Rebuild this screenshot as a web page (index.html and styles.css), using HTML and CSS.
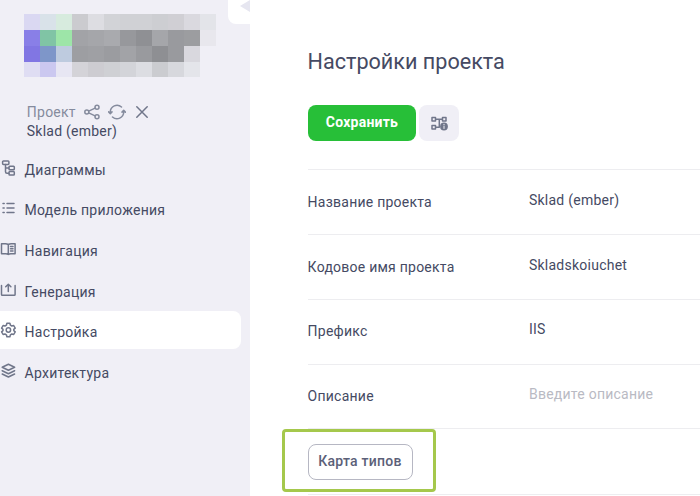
FILE: index.html
```html
<!DOCTYPE html>
<html lang="ru">
<head>
<meta charset="utf-8">
<title>Настройки проекта</title>
<link rel="stylesheet" href="styles.css">
</head>
<body>
<div class="app">
  <aside class="sidebar">
    <svg class="logo" width="192" height="63" viewBox="0 0 192 63" shape-rendering="crispEdges">
      <g><rect width="16" height="16" fill="#dad8f2"/><rect x="16" width="16" height="16" fill="#d9e2e9"/><rect x="32" width="16" height="16" fill="#d7ebde"/><rect x="48" width="16" height="16" fill="#cbcbcf"/><rect x="64" width="16" height="16" fill="#dddde2"/><rect x="80" width="16" height="16" fill="#d2d3d7"/><rect x="96" width="48" height="16" fill="#d0d1d5"/><rect x="128" width="16" height="16" fill="#cdced2"/><rect x="144" width="16" height="16" fill="#d0cfd4"/><rect x="160" width="16" height="16" fill="#dad9df"/><rect x="176" width="16" height="16" fill="#e3e4e9"/></g>
      <g transform="translate(0 16)"><rect width="16" height="16" fill="#897fe7"/><rect x="16" width="16" height="16" fill="#80c4a5"/><rect x="32" width="16" height="16" fill="#9de5a8"/><rect x="48" width="16" height="16" fill="#a2a3a7"/><rect x="64" width="16" height="16" fill="#a5a6aa"/><rect x="80" width="16" height="16" fill="#a9aaae"/><rect x="96" width="16" height="16" fill="#97989c"/><rect x="112" width="16" height="16" fill="#8f9094"/><rect x="128" width="16" height="16" fill="#a5a6aa"/><rect x="144" width="16" height="16" fill="#999a9e"/><rect x="160" width="16" height="16" fill="#9c9da0"/><rect x="176" width="16" height="16" fill="#e8e7ed"/></g>
      <g transform="translate(0 32)"><rect width="16" height="16" fill="#8176e3"/><rect x="16" width="16" height="16" fill="#7e96c9"/><rect x="32" width="16" height="16" fill="#becbdf"/><rect x="48" width="16" height="16" fill="#9d9ea2"/><rect x="64" width="16" height="16" fill="#9fa0a4"/><rect x="80" width="16" height="16" fill="#9b9ca0"/><rect x="96" width="16" height="16" fill="#a2a3a7"/><rect x="112" width="16" height="16" fill="#999a9e"/><rect x="128" width="16" height="16" fill="#8e8f93"/><rect x="144" width="16" height="16" fill="#999a9e"/><rect x="160" width="16" height="16" fill="#d9d8de"/></g>
      <g transform="translate(0 48)"><rect width="16" height="15" fill="#dfddf3"/><rect x="16" width="16" height="15" fill="#cbc8f0"/><rect x="32" width="16" height="15" fill="#e7e6f3"/><rect x="48" width="16" height="15" fill="#d4d3d8"/><rect x="64" width="16" height="15" fill="#cdccd1"/><rect x="80" width="16" height="15" fill="#cfd0d4"/><rect x="96" width="16" height="15" fill="#d3d4d9"/><rect x="112" width="16" height="15" fill="#dcdde2"/><rect x="128" width="16" height="15" fill="#cbccd0"/><rect x="144" width="16" height="15" fill="#d7d8dd"/><rect x="160" width="16" height="15" fill="#e4e5ea"/></g>
    </svg>
    <div class="collapse"><svg width="10" height="12" viewBox="0 0 10 12"><path d="M0 6 10 0v12z"/></svg></div>
    <div class="project">
      <div class="project-head">
        <span class="muted">Проект</span>
        <svg class="icon share" width="16" height="16" viewBox="0 0 16 16"><circle cx="2.8" cy="8" r="2"/><circle cx="13" cy="3.2" r="2"/><circle cx="13" cy="12.8" r="2"/><path d="m4.7 7.1 6.400-3M4.700 8.900l6.400 3"/></svg>
        <svg class="icon refresh" width="18" height="16" viewBox="0 0 18 16"><path d="M2.300 9.500V8A6.700 6.700 0 0 1 13.500 3M15.700 6.500V8A6.700 6.700 0 0 1 4.500 13M.6 7.900l1.700 1.700L4 7.900M14 8.100l1.700-1.700 1.700 1.700"/></svg>
        <svg class="icon close" width="12" height="12" viewBox="0 0 12 12"><path d="m.8.8 10.400 10.400M11.200.8.8 11.200"/></svg>
      </div>
      <div>Sklad (ember)</div>
    </div>
    <nav class="nav">
      <a class="nav-item"><svg class="icon" width="16" height="16" viewBox="0 0 16 16"><rect x="2.600" y="1" width="6.300" height="3.400" rx=".8"/><rect x="9" y="6.300" width="5.300" height="3.400" rx=".8"/><rect x="9" y="11.600" width="5.300" height="3.400" rx=".8"/><path d="M5.500 4.400v7.400q0 1.500 1.500 1.500h2M5.500 8H9"/></svg><span>Диаграммы</span></a>
      <a class="nav-item"><svg class="icon" width="16" height="16" viewBox="0 0 16 16"><path d="M3 3.500h1.200M3 8h1.200M3 12.500h1.200M7 3.500h7M7 8h7M7 12.500h7"/></svg><span>Модель приложения</span></a>
      <a class="nav-item"><svg class="icon" width="16" height="16" viewBox="0 0 16 16"><path d="M8.300 3.500Q7 2.700 5.500 2.700h-4v10h4.300q1.500 0 2.500.8 1-.8 2.500-.8h4.300v-10h-4q-1.500 0-2.800.8zm0 0v10M10.500 5.500h2.500M10.500 7.800h2.500M10.500 10.100h2.500"/></svg><span>Навигация</span></a>
      <a class="nav-item"><svg class="icon" width="16" height="16" viewBox="0 0 16 16"><path d="M1.500 3.500v9q0 .8.800.8h12q.8 0 .8-.8v-9M8.300 9.500V2.200M5.700 4.800l2.600-2.600 2.600 2.600"/></svg><span>Генерация</span></a>
      <a class="nav-item active"><svg class="icon" width="16" height="16" viewBox="0 0 16 16"><circle cx="8.400" cy="8" r="2.200"/><path d="m6.900 1.300h3l.5 1.900 1.400.8 1.900-.5 1.500 2.600-1.400 1.300v1.200l1.400 1.300-1.500 2.600-1.900-.5-1.400.8-.5 1.900h-3l-.5-1.900-1.400-.8-1.900.5-1.500-2.600L3 8.600V7.400L1.600 6.100l1.500-2.600 1.900.5 1.400-.8z"/></svg><span>Настройка</span></a>
      <a class="nav-item"><svg class="icon" width="16" height="16" viewBox="0 0 16 16"><path d="m8.400 1.300 6.200 3-6.200 3-6.200-3zM2.200 7.700l6.200 3 6.200-3M2.200 11l6.200 3 6.200-3"/></svg><span>Архитектура</span></a>
    </nav>
  </aside>
  <main class="main">
    <h1>Настройки проекта</h1>
    <div class="toolbar">
      <button class="btn save">Сохранить</button>
      <button class="btn square"><svg class="icon" width="18" height="16" viewBox="0 0 18 16"><path d="M2 2.500h3.500V6H2zM12.500 2.500H16V6h-3.500zM2 10.500h3.500V14H2zM5.500 4.300h7M5.500 12.300H9M9.300 4.300v8"/><circle class="solid" cx="14" cy="11.500" r="3.900"/><path class="mark" d="M14 9.300v.5M14 11.200v2.300"/></svg></button>
    </div>
    <div class="form">
      <div class="row"><label>Название проекта</label><span class="value">Sklad (ember)</span></div>
      <div class="row"><label>Кодовое имя проекта</label><span class="value">Skladskoiuchet</span></div>
      <div class="row"><label>Префикс</label><span class="value">IIS</span></div>
      <div class="row last-field"><label>Описание</label><span class="value placeholder">Введите описание</span></div>
      <div class="row types"><div class="highlight"><button class="btn outline">Карта типов</button></div></div>
      <div class="row"></div>
    </div>
  </main>
</div>
</body>
</html>
```
FILE: styles.css
```css
* { box-sizing: border-box; }
body {
  margin: 0;
  font-family: Roboto, "Liberation Sans", sans-serif;
  font-size: 14px;
  letter-spacing: 0.24px;
  color: #454a63;
  background: #fff;
}
.app { display: flex; width: 700px; height: 496px; overflow: hidden; }
.sidebar { position: relative; flex: 0 0 250px; background: #f0eff6; }
.logo { display: block; margin: 14px 0 0 24px; }
.collapse {
  position: absolute;
  top: 0;
  right: 0;
  width: 22px;
  height: 24px;
  padding-left: 12px;
  background: #fff;
  border-bottom-left-radius: 8px;
}
.collapse svg { display: block; fill: #e6e6f0; }
.project { margin: 25px 0 0 26.800px; line-height: 19px; }
.project-head { display: flex; align-items: center; height: 20px; }
.muted { color: #858b9d; }
.icon {
  flex: none;
  fill: none;
  stroke: #70768a;
  stroke-width: 1.5;
  stroke-linecap: round;
  stroke-linejoin: round;
}
.share { margin-left: 8.600px; stroke: #858b9d; }
.refresh { margin-left: 8px; stroke: #858b9d; }
.close { margin-left: 10px; }
.nav { display: flex; flex-direction: column; gap: 2.600px; margin-top: 7.800px; }
.nav-item {
  display: flex;
  align-items: center;
  gap: 8.600px;
  width: 241px;
  height: 38px;
}
.nav-item span { padding-top: 4px; }
.active { background: #fff; border-radius: 0 8px 8px 0; }
.main { flex: 1; padding: 48px 0 0 57.600px; }
h1 { margin: 0; font-size: 21.600px; font-weight: 400; line-height: 28px; letter-spacing: 0; }
.toolbar { display: flex; gap: 3px; margin: 29px 0 0 0.400px; }
.btn {
  display: flex;
  align-items: center;
  justify-content: center;
  height: 36px;
  padding: 0;
  border: 0;
  border-radius: 8px;
  font: inherit;
  letter-spacing: inherit;
}
.save { width: 108px; padding-bottom: 2px; color: #fff; background: #27bf38; font-weight: 700; }
.square { width: 40px; background: #f0eff6; }
.solid { fill: #70768a; stroke: none; }
.mark { stroke: #f0eff6; stroke-width: 1; }
.form { margin-top: 28px; }
.row {
  display: flex;
  align-items: center;
  height: 65px;
  border-top: 1px solid #ededf0;
}
.row label { width: 221.400px; padding-bottom: 1px; }
.row:nth-child(3) label { padding-bottom: 2px; }
.value { padding-bottom: 4px; }
.row:nth-child(3) .value { padding-bottom: 6px; }
.placeholder { color: #b9bac3; }
.last-field { height: 64px; }
.last-field .value { padding-bottom: 6px; }
.last-field label { padding-bottom: 2px; }
.types { height: 66px; align-items: flex-start; }
.highlight {
  display: flex;
  flex: none;
  align-items: center;
  justify-content: center;
  width: 154px;
  height: 63px;
  margin-left: -25.600px;
  padding: 2px 0 0 2px;
  border: 3px solid #a5c84c;
  border-radius: 4px;
}
.outline {
  width: 105px;
  padding-bottom: 1px;
  color: #5b6078;
  background: #fff;
  border: 1px solid #b6b7c3;
  font-weight: 500;
}
```
